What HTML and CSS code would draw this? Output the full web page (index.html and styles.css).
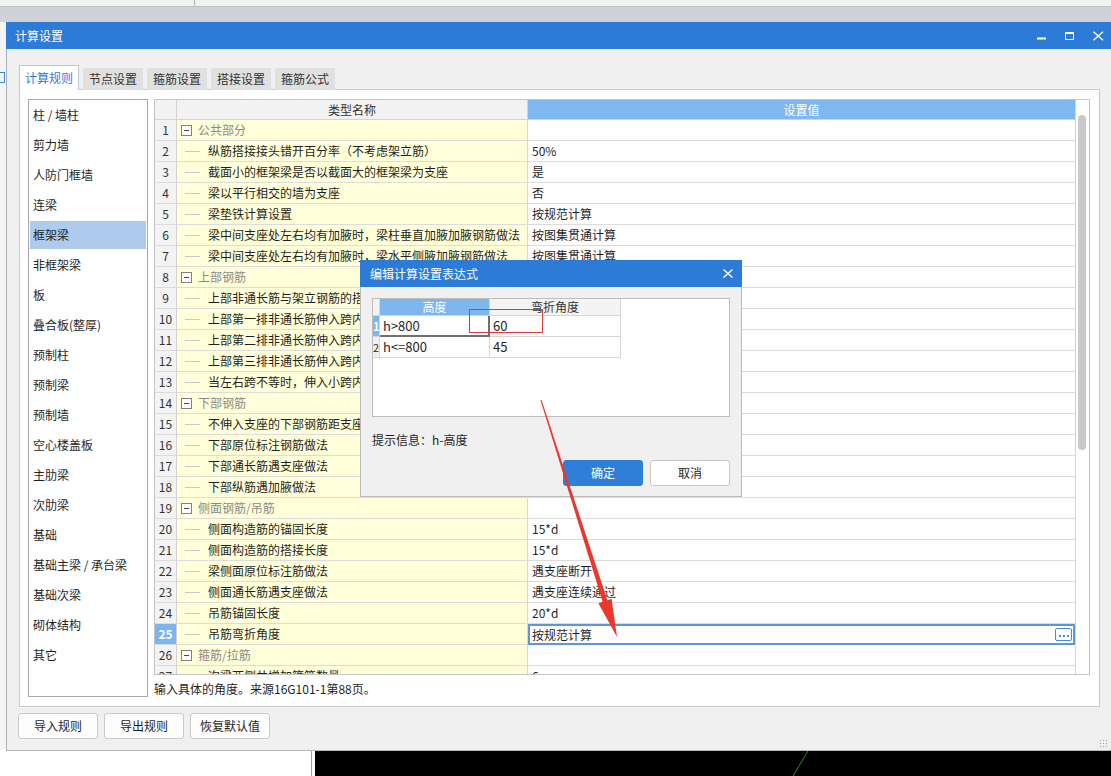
FILE: index.html
```html
<!DOCTYPE html>
<html lang="zh-CN">
<head>
<meta charset="utf-8">
<title>计算设置</title>
<link rel="stylesheet" href="styles.css">
</head>
<body>
<div class="desk">
  <div class="desk-top"><span class="desk-tick"></span></div>
  <div class="desk-band"></div>
  <div class="desk-mid"><div class="desk-left"><span class="desk-icon"></span></div></div>
  <div class="desk-bottom">
    <div class="desk-white"></div>
    <div class="desk-gap"></div>
    <div class="desk-canvas">
      <svg width="796" height="25" viewBox="0 0 796 25"><line x1="493" y1="0" x2="478" y2="25" stroke="#2f8a2f" stroke-width="1"/></svg>
    </div>
  </div>
</div>

<div class="main-win">
  <div class="titlebar">
    <span class="title">计算设置</span>
    <div class="winbtns">
      <span class="wbtn"><svg width="10" height="10" viewBox="0 0 10 10"><rect x="0" y="6.5" width="9" height="2" fill="#fff"/></svg></span>
      <span class="wbtn"><svg width="10" height="10" viewBox="0 0 10 10"><rect x="0.5" y="1.5" width="8" height="7" fill="none" stroke="#fff" stroke-width="1"/><rect x="0" y="1" width="9" height="2" fill="#fff"/></svg></span>
      <span class="wbtn"><svg width="11" height="10" viewBox="0 0 11 10"><path d="M0.5 0.8 L10 9.2 M10 0.8 L0.5 9.2" stroke="#fff" stroke-width="1.4"/></svg></span>
    </div>
  </div>

  <div class="tabs">
    <span class="tab active">计算规则</span>
    <span class="tab">节点设置</span>
    <span class="tab">箍筋设置</span>
    <span class="tab">搭接设置</span>
    <span class="tab">箍筋公式</span>
  </div>

  <div class="panel">
    <ul class="cat-list">
      <li><span>柱 / 墙柱</span></li>
      <li><span>剪力墙</span></li>
      <li><span>人防门框墙</span></li>
      <li><span>连梁</span></li>
      <li class="sel"><span>框架梁</span></li>
      <li><span>非框架梁</span></li>
      <li><span>板</span></li>
      <li><span>叠合板(整厚)</span></li>
      <li><span>预制柱</span></li>
      <li><span>预制梁</span></li>
      <li><span>预制墙</span></li>
      <li><span>空心楼盖板</span></li>
      <li><span>主肋梁</span></li>
      <li><span>次肋梁</span></li>
      <li><span>基础</span></li>
      <li><span>基础主梁 / 承台梁</span></li>
      <li><span>基础次梁</span></li>
      <li><span>砌体结构</span></li>
      <li><span>其它</span></li>
    </ul>

    <div class="right-col">
      <div class="grid">
        <div class="table">
          <div class="row head"><div class="h-num"></div><div class="h-name">类型名称</div><div class="h-val">设置值</div></div>
          <div class="row"><div class="c-num">1</div><div class="c-name grp"><i class="tog"></i>公共部分</div><div class="c-val"></div></div>
          <div class="row"><div class="c-num">2</div><div class="c-name"><i class="tl"></i>纵筋搭接接头错开百分率（不考虑架立筋）</div><div class="c-val">50%</div></div>
          <div class="row"><div class="c-num">3</div><div class="c-name"><i class="tl"></i>截面小的框架梁是否以截面大的框架梁为支座</div><div class="c-val">是</div></div>
          <div class="row"><div class="c-num">4</div><div class="c-name"><i class="tl"></i>梁以平行相交的墙为支座</div><div class="c-val">否</div></div>
          <div class="row"><div class="c-num">5</div><div class="c-name"><i class="tl"></i>梁垫铁计算设置</div><div class="c-val">按规范计算</div></div>
          <div class="row"><div class="c-num">6</div><div class="c-name"><i class="tl"></i>梁中间支座处左右均有加腋时，梁柱垂直加腋加腋钢筋做法</div><div class="c-val">按图集贯通计算</div></div>
          <div class="row"><div class="c-num">7</div><div class="c-name"><i class="tl"></i>梁中间支座处左右均有加腋时，梁水平侧腋加腋钢筋做法</div><div class="c-val">按图集贯通计算</div></div>
          <div class="row"><div class="c-num">8</div><div class="c-name grp"><i class="tog"></i>上部钢筋</div><div class="c-val"></div></div>
          <div class="row"><div class="c-num">9</div><div class="c-name"><i class="tl"></i>上部非通长筋与架立钢筋的搭接长度</div><div class="c-val">150</div></div>
          <div class="row"><div class="c-num">10</div><div class="c-name"><i class="tl"></i>上部第一排非通长筋伸入跨内的长度</div><div class="c-val">Ln/3</div></div>
          <div class="row"><div class="c-num">11</div><div class="c-name"><i class="tl"></i>上部第二排非通长筋伸入跨内的长度</div><div class="c-val">Ln/4</div></div>
          <div class="row"><div class="c-num">12</div><div class="c-name"><i class="tl"></i>上部第三排非通长筋伸入跨内的长度</div><div class="c-val">Ln/5</div></div>
          <div class="row"><div class="c-num">13</div><div class="c-name"><i class="tl"></i>当左右跨不等时，伸入小跨内负筋的L取值</div><div class="c-val">取左右最大跨计算</div></div>
          <div class="row"><div class="c-num">14</div><div class="c-name grp"><i class="tog"></i>下部钢筋</div><div class="c-val"></div></div>
          <div class="row"><div class="c-num">15</div><div class="c-name"><i class="tl"></i>不伸入支座的下部钢筋距支座边的距离</div><div class="c-val">0.1*L</div></div>
          <div class="row"><div class="c-num">16</div><div class="c-name"><i class="tl"></i>下部原位标注钢筋做法</div><div class="c-val">遇支座断开</div></div>
          <div class="row"><div class="c-num">17</div><div class="c-name"><i class="tl"></i>下部通长筋遇支座做法</div><div class="c-val">遇支座连续通过</div></div>
          <div class="row"><div class="c-num">18</div><div class="c-name"><i class="tl"></i>下部纵筋遇加腋做法</div><div class="c-val">锚入加腋</div></div>
          <div class="row"><div class="c-num">19</div><div class="c-name grp"><i class="tog"></i>侧面钢筋/吊筋</div><div class="c-val"></div></div>
          <div class="row"><div class="c-num">20</div><div class="c-name"><i class="tl"></i>侧面构造筋的锚固长度</div><div class="c-val">15*d</div></div>
          <div class="row"><div class="c-num">21</div><div class="c-name"><i class="tl"></i>侧面构造筋的搭接长度</div><div class="c-val">15*d</div></div>
          <div class="row"><div class="c-num">22</div><div class="c-name"><i class="tl"></i>梁侧面原位标注筋做法</div><div class="c-val">遇支座断开</div></div>
          <div class="row"><div class="c-num">23</div><div class="c-name"><i class="tl"></i>侧面通长筋遇支座做法</div><div class="c-val">遇支座连续通过</div></div>
          <div class="row"><div class="c-num">24</div><div class="c-name"><i class="tl"></i>吊筋锚固长度</div><div class="c-val">20*d</div></div>
          <div class="row cur"><div class="c-num">25</div><div class="c-name"><i class="tl"></i>吊筋弯折角度</div><div class="c-val"><span>按规范计算</span><span class="more"><b></b><b></b><b></b></span></div></div>
          <div class="row"><div class="c-num">26</div><div class="c-name grp"><i class="tog"></i>箍筋/拉筋</div><div class="c-val"></div></div>
          <div class="row"><div class="c-num">27</div><div class="c-name"><i class="tl"></i>次梁两侧共增加箍筋数量</div><div class="c-val">6</div></div>
        </div>
        <div class="vscroll"><div class="thumb"></div></div>
      </div>
      <div class="desc">输入具体的角度。来源16G101-1第88页。</div>
    </div>
  </div>

  <div class="actions">
    <span class="btn">导入规则</span>
    <span class="btn">导出规则</span>
    <span class="btn">恢复默认值</span>
  </div>
  <span class="grip"></span>
</div>

<div class="dlg">
  <div class="dlg-title">
    <span>编辑计算设置表达式</span>
    <svg class="dlg-close" width="10" height="9" viewBox="0 0 10 9"><path d="M0.5 0.5 L9.5 8.5 M9.5 0.5 L0.5 8.5" stroke="#fff" stroke-width="1.4"/></svg>
  </div>
  <div class="dlg-body">
    <div class="ebox">
      <div class="erow ehead"><div class="e-rh"></div><div class="e-c hsel">高度</div><div class="e-c">弯折角度</div></div>
      <div class="erow"><div class="e-rh on">1</div><div class="e-c cur">h&gt;800</div><div class="e-c">60</div></div>
      <div class="erow"><div class="e-rh">2</div><div class="e-c">h&lt;=800</div><div class="e-c">45</div></div>
    </div>
    <div class="hint">提示信息：h-高度</div>
    <div class="dlg-actions">
      <span class="dbtn primary">确定</span>
      <span class="dbtn">取消</span>
    </div>
  </div>
</div>

<svg class="annot" width="1111" height="776" viewBox="0 0 1111 776">
  <rect x="469.5" y="309.5" width="73" height="23" fill="none" stroke="#e23b3b" stroke-width="1"/>
  <polygon points="540.5,400.2 541.5,399.8 607.4,600.2 611.6,598.8 617,637 598.4,603.2 602.6,601.8" fill="#e8392f"/>
</svg>
</body>
</html>
```

FILE: styles.css
```css
* { box-sizing: border-box; }
html, body { margin: 0; padding: 0; }
body {
  width: 1111px;
  height: 776px;
  overflow: hidden;
  position: relative;
  font-family: "Noto Sans CJK SC", "Microsoft YaHei", sans-serif;
  font-size: 12px;
  color: #1f1f1f;
  background: #f0f0f0;
}

/* background desktop */
.desk { display: flex; flex-direction: column; height: 776px; }
.desk-top { height: 6px; display: flex; padding-left: 194px; background: #f2f2f2; }
.desk-tick { width: 1px; background: #b4b4b4; }
.desk-band { height: 16px; background: #cfd3d8; border-top: 1px solid #bfc3c8; }
.desk-mid { flex: 1; display: flex; }
.desk-left { width: 7px; background: #f5f5f5; padding-top: 50px; }
.desk-icon { display: block; width: 5px; height: 11px; border: 1px solid #3f86d4; border-left: none; }
.desk-bottom { height: 26px; display: flex; background: #fff; }
.desk-white { width: 312px; background: #fff; border-right: 1px solid #a0a0a0; }
.desk-gap { width: 3px; }
.desk-canvas { flex: 1; background: #000; margin-top: 1px; overflow: hidden; }
.desk-canvas svg { display: block; }

/* main window */
.main-win {
  position: absolute;
  left: 6px;
  top: 22px;
  width: 1106px;
  height: 729px;
  background: #f0f0f0;
  border-left: 1px solid #a9b1bb;
  border-bottom: 1px solid #b8b8b8;
  display: flex;
  flex-direction: column;
}
.titlebar {
  height: 27px;
  flex: none;
  background: #2c7cd7;
  color: #fff;
  display: flex;
  align-items: center;
  padding-left: 8px;
  margin-left: -1px;
}
.title { line-height: 27px; padding-left: 1px; }
.winbtns { margin-left: auto; display: flex; height: 100%; }
.wbtn { width: 28px; display: flex; align-items: center; justify-content: center; }
.wbtn svg { display: block; }

.tabs {
  display: flex;
  align-items: flex-end;
  gap: 4px;
  margin: 16px 0 -1px 12px;
  height: 25px;
  flex: none;
  position: relative;
  z-index: 1;
}
.tab {
  width: 60px;
  height: 22px;
  background: #e0e0e0;
  color: #333;
  text-align: center;
  line-height: 22px;
}
.tab.active {
  height: 25px;
  background: #fff;
  color: #2c7cd7;
  border: 1px solid #c6c6c6;
  border-bottom: none;
  line-height: 24px;
}

.panel {
  margin-left: 12px;
  width: 1081px;
  height: 618px;
  flex: none;
  background: #fff;
  border: 1px solid #c9c9c9;
  padding: 9px 8px;
  display: flex;
  gap: 6px;
}

.cat-list {
  width: 120px;
  height: 598px;
  margin: 0;
  padding: 0 1px;
  list-style: none;
  border: 1px solid #a8a8a8;
  flex: none;
}
.cat-list li { height: 30px; padding: 1px 0; }
.cat-list li span { display: block; height: 28px; line-height: 28px; padding-left: 3px; white-space: nowrap; }
.cat-list li.sel span { background: #aecaec; }

.right-col { width: 936px; display: flex; flex-direction: column; flex: none; }
.grid {
  height: 576px;
  border: 1px solid #c4c4c4;
  display: flex;
  overflow: hidden;
  flex: none;
}
.table { width: 920px; flex: none; }
.row { display: grid; grid-template-columns: 22px 351px 547px; height: 21px; }
.row > div {
  border-bottom: 1px solid #dcdcdc;
  line-height: 20px;
  white-space: nowrap;
  overflow: hidden;
}
.row.head { height: 20px; }
.row.head > div { line-height: 19px; text-align: center; background: #f2f2f2; border-bottom: 1px solid #d3d3d3; color: #333; }
.row.head .h-num { border-right: 1px solid #d2d2d2; }
.row.head .h-name { border-right: 1px solid #d2d2d2; }
.row.head .h-val { background: #7fb7f1; color: #fff; }

.c-num { background: #f3f3f3; border-right: 1px solid #d2d2d2; text-align: center; color: #333; }
.c-name { background: #ffffd9; border-right: 1px solid #d9d9c6; display: flex; align-items: center; }
.c-name.grp { color: #8a8a8a; }
.c-val { padding-left: 4px; background: #fff; }

.tl { width: 15px; height: 1px; background: #c9c9c9; margin: 0 8px; flex: none; }
.tog {
  width: 11px;
  height: 11px;
  border: 1px solid #808080;
  margin: 0 6px 0 4px;
  background: linear-gradient(#444, #444) center / 5px 1px no-repeat, #fff;
  flex: none;
}

.row.cur .c-num { background: #7cb5ef; color: #fff; font-weight: bold; }
.row.cur .c-val {
  border: 2px solid #5d97d3;
  padding-left: 2px;
  display: flex;
  align-items: center;
  line-height: 17px;
}
.more {
  margin-left: auto;
  margin-right: 1px;
  width: 17px;
  height: 13px;
  border: 1px solid #4a8bd0;
  border-radius: 2px;
  display: flex;
  align-items: center;
  justify-content: center;
  gap: 2px;
  padding-top: 3px;
}
.more b { width: 2px; height: 2px; background: #4a8bd0; }

.vscroll { width: 14px; border-left: 1px solid #d4d4d4; padding: 15px 0 0 2px; background: #fff; flex: none; }
.thumb { width: 8px; height: 335px; border-radius: 4px; background: #c9c9c9; }

.desc { margin-top: 6px; line-height: 16px; white-space: nowrap; }

.actions { display: flex; gap: 6px; margin: 6px 0 0 11px; }
.btn {
  width: 80px;
  height: 26px;
  border: 1px solid #cacaca;
  border-radius: 3px;
  background: #fdfdfd;
  text-align: center;
  line-height: 24px;
}
.grip {
  position: absolute;
  right: 5px;
  bottom: 3px;
  width: 8px;
  height: 8px;
  background: radial-gradient(circle, #9a9a9a 0.8px, transparent 1px) 0 0 / 3px 3px;
}

/* sub dialog */
.dlg {
  position: absolute;
  left: 360px;
  top: 260px;
  width: 382px;
  background: #f0f0f0;
  border: 1px solid #bcbcbc;
  border-top: none;
  display: flex;
  flex-direction: column;
}
.dlg-title {
  height: 27px;
  margin: 0 -1px;
  background: #2c7cd7;
  color: #fff;
  display: flex;
  align-items: center;
  padding-left: 10px;
  flex: none;
}
.dlg-close { margin-left: auto; margin-right: 9px; display: block; }
.dlg-body { padding: 11px 11px 10px; display: flex; flex-direction: column; }
.ebox { height: 119px; border: 1px solid #bdbdbd; background: #fff; flex: none; }
.erow { display: grid; grid-template-columns: 7px 110px 131px; height: 21px; }
.erow > div {
  border-right: 1px solid #d6d6d6;
  border-bottom: 1px solid #d6d6d6;
  line-height: 20px;
  white-space: nowrap;
  overflow: hidden;
  padding-left: 3px;
  font-size: 13px;
}
.erow.ehead { height: 17px; }
.erow.ehead > div { line-height: 16px; text-align: center; padding: 0; font-size: 12px; background: #f4f4f4; color: #333; }
.erow.ehead > div.hsel { background: #7eb6f0; color: #fff; }
.erow > .e-rh { padding: 0; background: #f0f0f0; font-size: 11px; text-align: center; }
.erow > .e-rh.on { background: #7eb6f0; color: #fff; font-weight: bold; }
.erow > .e-c.cur { border-right: 2px solid #6f6f6f; border-bottom: 2px solid #6f6f6f; }

.hint { margin-top: 15px; line-height: 16px; }
.dlg-actions { display: flex; justify-content: flex-end; gap: 7px; margin-top: 12px; }
.dbtn {
  width: 80px;
  height: 26px;
  border-radius: 3px;
  border: 1px solid #c8c8c8;
  background: #fff;
  text-align: center;
  line-height: 24px;
}
.dbtn.primary { background: #2f7fd9; border-color: #2f7fd9; color: #fff; }

.annot { position: absolute; left: 0; top: 0; pointer-events: none; }
```
